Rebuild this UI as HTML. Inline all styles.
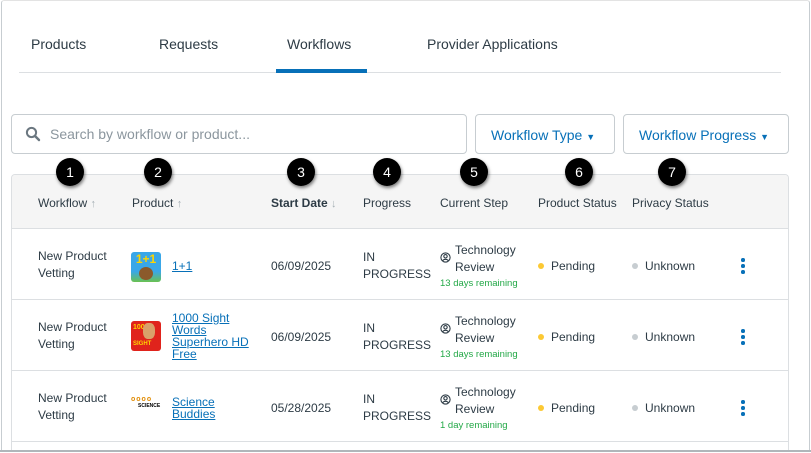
<!DOCTYPE html>
<html><head><style>
*{box-sizing:border-box;margin:0;padding:0}
html,body{width:811px;height:453px;overflow:hidden}
body{background:#fff;font-family:"Liberation Sans",sans-serif;color:#2d3b45;position:relative;font-size:12px}
.frame{position:absolute;left:1px;top:0;width:809px;height:453px;border:1px solid #c7cdd1;border-top-color:#e3e3e3;border-radius:3px}
.a{position:absolute;white-space:nowrap}
.tab{font-size:14px;top:36px;color:#2d3b45}
.tabline{position:absolute;left:19px;top:72px;width:762px;height:1px;background:#dcdfe2}
.active{position:absolute;left:276px;top:69px;width:91px;height:4px;background:#0770b8}
.box{position:absolute;border:1px solid #c7cdd1;border-radius:4px;background:#fff}
.btn{color:#0770b8;font-size:14px}
.table{position:absolute;left:11px;top:174px;width:778px;height:279px;border:1px solid #dcdfe2;border-bottom:none;border-radius:4px 4px 0 0;overflow:hidden}
.head{position:absolute;left:0;top:0;width:100%;height:54px;background:#f5f5f5;border-bottom:1px solid #dcdfe2}
.row{position:absolute;left:0;width:100%;height:71px;border-bottom:1px solid #dcdfe2}
.h{font-size:12px;color:#2d3b45;top:21px}
.arr{color:#a5afb5;font-size:11px}
.c{font-size:12px;line-height:17px}
.lnk{color:#0770b8;text-decoration:underline;font-size:12px;line-height:12px}
.green{color:#23a847;font-size:9.5px}
.dot{display:inline-block;width:6px;height:6px;border-radius:50%;margin-right:7px;vertical-align:1px}
.keb{position:absolute;width:4px}
.keb i{display:block;width:3.5px;height:3.5px;border-radius:50%;background:#0770b8;margin-bottom:2.5px}
.badge{position:absolute;width:28px;height:28px;border-radius:50%;background:#000;color:#fff;font-size:14px;text-align:center;line-height:28px;box-shadow:1px 2px 3px rgba(0,0,0,.5);top:158px}
.icon{position:absolute;width:30px;height:30px;border-radius:3px;overflow:hidden}
.pi{position:absolute;left:0;top:10px}
</style></head><body>
<div class="frame"></div>
<div class="a tab" style="left:31px">Products</div>
<div class="a tab" style="left:159px">Requests</div>
<div class="a tab" style="left:287px">Workflows</div>
<div class="a tab" style="left:427px">Provider Applications</div>
<div class="tabline"></div><div class="active"></div>

<div class="box" style="left:11px;top:114px;width:456px;height:40px"></div>
<svg class="a" style="left:25px;top:126px" width="16" height="16" viewBox="0 0 16 16"><circle cx="6.5" cy="6.5" r="4.6" fill="none" stroke="#6b7780" stroke-width="2"/><path d="M10 10l4 4" stroke="#6b7780" stroke-width="2.4" stroke-linecap="round"/></svg>
<div class="a" style="left:50px;top:126px;font-size:14px;color:#8b969e">Search by workflow or product...</div>
<div class="box" style="left:475px;top:114px;width:140px;height:40px"></div>
<div class="a btn" style="left:491px;top:127px">Workflow Type <span style="font-size:9px">▼</span></div>
<div class="box" style="left:623px;top:114px;width:166px;height:40px"></div>
<div class="a btn" style="left:639px;top:127px">Workflow Progress <span style="font-size:9px">▼</span></div>

<div class="table">
 <div class="head"></div>
 <div class="a h" style="left:26px">Workflow <span class="arr">↑</span></div>
 <div class="a h" style="left:120px">Product <span class="arr">↑</span></div>
 <div class="a h" style="left:259px;font-weight:bold">Start Date <span class="arr">↓</span></div>
 <div class="a h" style="left:351px">Progress</div>
 <div class="a h" style="left:428px">Current Step</div>
 <div class="a h" style="left:526px">Product Status</div>
 <div class="a h" style="left:620px">Privacy Status</div>
 <div class="row" style="top:54px"></div>
 <div class="row" style="top:125px"></div>
 <div class="row" style="top:196px"></div>
</div>

<div class="a c" style="left:38px;top:248px">New Product<br>Vetting</div>
<div class="icon" style="left:131px;top:252px;background:linear-gradient(#3aa7e8 0,#3aa7e8 65%,#6ac150 100%)"><div style="color:#ffd400;font-weight:bold;font-size:12px;text-align:center;line-height:14px">1+1</div><div style="width:14px;height:13px;background:#8b5a2b;border-radius:50%;margin:1px auto"></div></div>
<div class="a lnk" style="left:172px;top:260px">1+1</div>
<div class="a c" style="left:271px;top:258px">06/09/2025</div>
<div class="a c" style="left:363px;top:249px">IN<br>PROGRESS</div>
<div class="a c" style="left:440px;top:242px"><svg class="pi" width="11" height="11" viewBox="0 0 11 11"><circle cx="5.5" cy="5.5" r="4.6" fill="none" stroke="#2d3b45" stroke-width="1.1"/><circle cx="5.5" cy="4.3" r="1.7" fill="none" stroke="#2d3b45" stroke-width="1.1"/><path d="M2.6 8.8c1.2-2 4.6-2 5.8 0" fill="none" stroke="#2d3b45" stroke-width="1.1"/></svg><span style="position:absolute;left:15px">Technology<br>Review</span></div>
<div class="a green" style="left:440px;top:278px">13 days remaining</div>
<div class="a c" style="left:538px;top:258px"><span class="dot" style="background:#fcc934"></span>Pending</div>
<div class="a c" style="left:632px;top:258px"><span class="dot" style="background:#c7cdd1"></span>Unknown</div>
<div class="keb" style="left:741px;top:258px"><i></i><i></i><i></i></div>

<div class="a c" style="left:38px;top:319px">New Product<br>Vetting</div>
<div class="icon" style="left:131px;top:321px;background:#e0231c"><div style="color:#ffd400;font-size:7px;font-weight:bold;padding:3px 0 0 2px">1000</div><div style="position:absolute;left:12px;top:2px;width:12px;height:16px;background:#d9a06a;border-radius:40%"></div><div style="color:#ffd400;font-size:6px;font-weight:bold;padding:10px 0 0 2px">SIGHT</div></div>
<div class="a lnk" style="left:172px;top:312px">1000 Sight<br>Words<br>Superhero HD<br>Free</div>
<div class="a c" style="left:271px;top:329px">06/09/2025</div>
<div class="a c" style="left:363px;top:320px">IN<br>PROGRESS</div>
<div class="a c" style="left:440px;top:313px"><svg class="pi" width="11" height="11" viewBox="0 0 11 11"><circle cx="5.5" cy="5.5" r="4.6" fill="none" stroke="#2d3b45" stroke-width="1.1"/><circle cx="5.5" cy="4.3" r="1.7" fill="none" stroke="#2d3b45" stroke-width="1.1"/><path d="M2.6 8.8c1.2-2 4.6-2 5.8 0" fill="none" stroke="#2d3b45" stroke-width="1.1"/></svg><span style="position:absolute;left:15px">Technology<br>Review</span></div>
<div class="a green" style="left:440px;top:349px">13 days remaining</div>
<div class="a c" style="left:538px;top:329px"><span class="dot" style="background:#fcc934"></span>Pending</div>
<div class="a c" style="left:632px;top:329px"><span class="dot" style="background:#c7cdd1"></span>Unknown</div>
<div class="keb" style="left:741px;top:329px"><i></i><i></i><i></i></div>

<div class="a c" style="left:38px;top:390px">New Product<br>Vetting</div>
<div class="icon" style="left:131px;top:396px;background:#fff"><div style="font-size:7px;color:#e08a00;font-weight:bold;letter-spacing:1px">oooo</div><div style="font-size:5px;font-weight:bold;color:#000;padding-left:7px">SCIENCE</div></div>
<div class="a lnk" style="left:172px;top:396px">Science<br>Buddies</div>
<div class="a c" style="left:271px;top:400px">05/28/2025</div>
<div class="a c" style="left:363px;top:391px">IN<br>PROGRESS</div>
<div class="a c" style="left:440px;top:384px"><svg class="pi" width="11" height="11" viewBox="0 0 11 11"><circle cx="5.5" cy="5.5" r="4.6" fill="none" stroke="#2d3b45" stroke-width="1.1"/><circle cx="5.5" cy="4.3" r="1.7" fill="none" stroke="#2d3b45" stroke-width="1.1"/><path d="M2.6 8.8c1.2-2 4.6-2 5.8 0" fill="none" stroke="#2d3b45" stroke-width="1.1"/></svg><span style="position:absolute;left:15px">Technology<br>Review</span></div>
<div class="a green" style="left:440px;top:420px">1 day remaining</div>
<div class="a c" style="left:538px;top:400px"><span class="dot" style="background:#fcc934"></span>Pending</div>
<div class="a c" style="left:632px;top:400px"><span class="dot" style="background:#c7cdd1"></span>Unknown</div>
<div class="keb" style="left:741px;top:400px"><i></i><i></i><i></i></div>

<div style="position:absolute;left:0;top:450px;width:811px;height:3px;background:#fff;border-top:2px solid #b0b6ba"></div>

<div class="badge" style="left:56px">1</div>
<div class="badge" style="left:144px">2</div>
<div class="badge" style="left:287px">3</div>
<div class="badge" style="left:373px">4</div>
<div class="badge" style="left:460px">5</div>
<div class="badge" style="left:565px">6</div>
<div class="badge" style="left:658px">7</div>
</body></html>
